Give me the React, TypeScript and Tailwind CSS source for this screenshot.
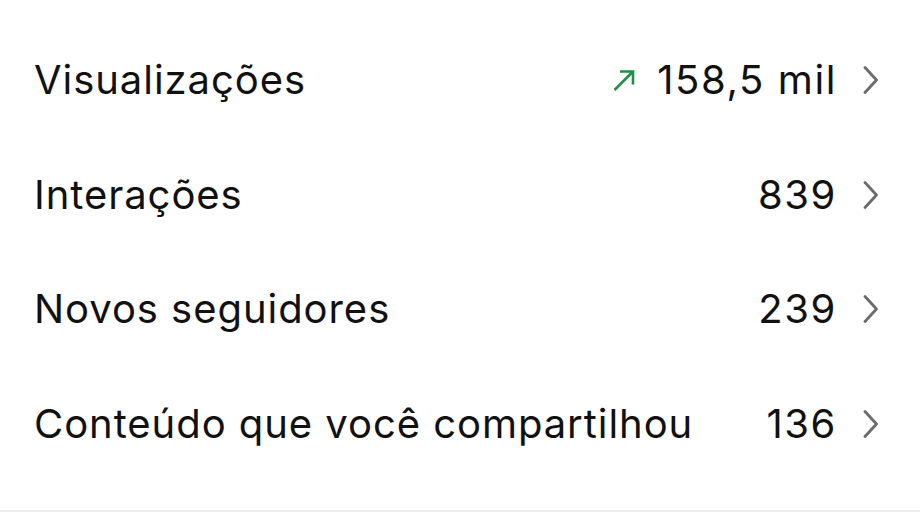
import React from "react";

type Row = { label: string; value: string; trend?: boolean };

const rows: Row[] = [
  { label: "Visualizações", value: "158,5 mil", trend: true },
  { label: "Interações", value: "839" },
  { label: "Novos seguidores", value: "239" },
  { label: "Conteúdo que você compartilhou", value: "136" },
];

function TrendUp() {
  return (
    <svg width="24" height="24" viewBox="0 0 24 24" fill="none" className="shrink-0">
      <path d="M2.5 22 L21 3.5 M8 3.5 H21 V16.5" stroke="#1f9146" strokeWidth="2.6" strokeLinecap="butt" strokeLinejoin="miter" />
    </svg>
  );
}

function Chevron() {
  return (
    <svg width="16" height="28" viewBox="0 0 16 28" fill="none" className="shrink-0">
      <path d="M2 1.5 L13.5 14 L2 26.5" stroke="#6b6b6b" strokeWidth="2.8" strokeLinecap="round" strokeLinejoin="round" />
    </svg>
  );
}

export default function App() {
  return (
    <div
      className="w-[920px] h-[532px] bg-white flex flex-col text-[#111111]"
      style={{ fontFamily: "Inter, 'Noto Sans', sans-serif" }}
    >
      <div className="flex flex-col pt-[23px] pl-[34px] pr-[41px]">
        {rows.map((r) => (
          <div key={r.label} className="h-[114.5px] flex items-center">
            <span className="text-[40px] leading-none tracking-[0.95px] flex-1">{r.label}</span>
            <div className="flex items-center">
              {r.trend && (
                <span className="mr-[21px] flex items-center">
                  <TrendUp />
                </span>
              )}
              <span className="text-[40px] leading-none tracking-[1.6px]">{r.value}</span>
              <span className="ml-[26px] flex items-center">
                <Chevron />
              </span>
            </div>
          </div>
        ))}
      </div>
      <div className="mt-auto mb-[20px] h-[2px] bg-[#f0f0f0]" />
    </div>
  );
}
